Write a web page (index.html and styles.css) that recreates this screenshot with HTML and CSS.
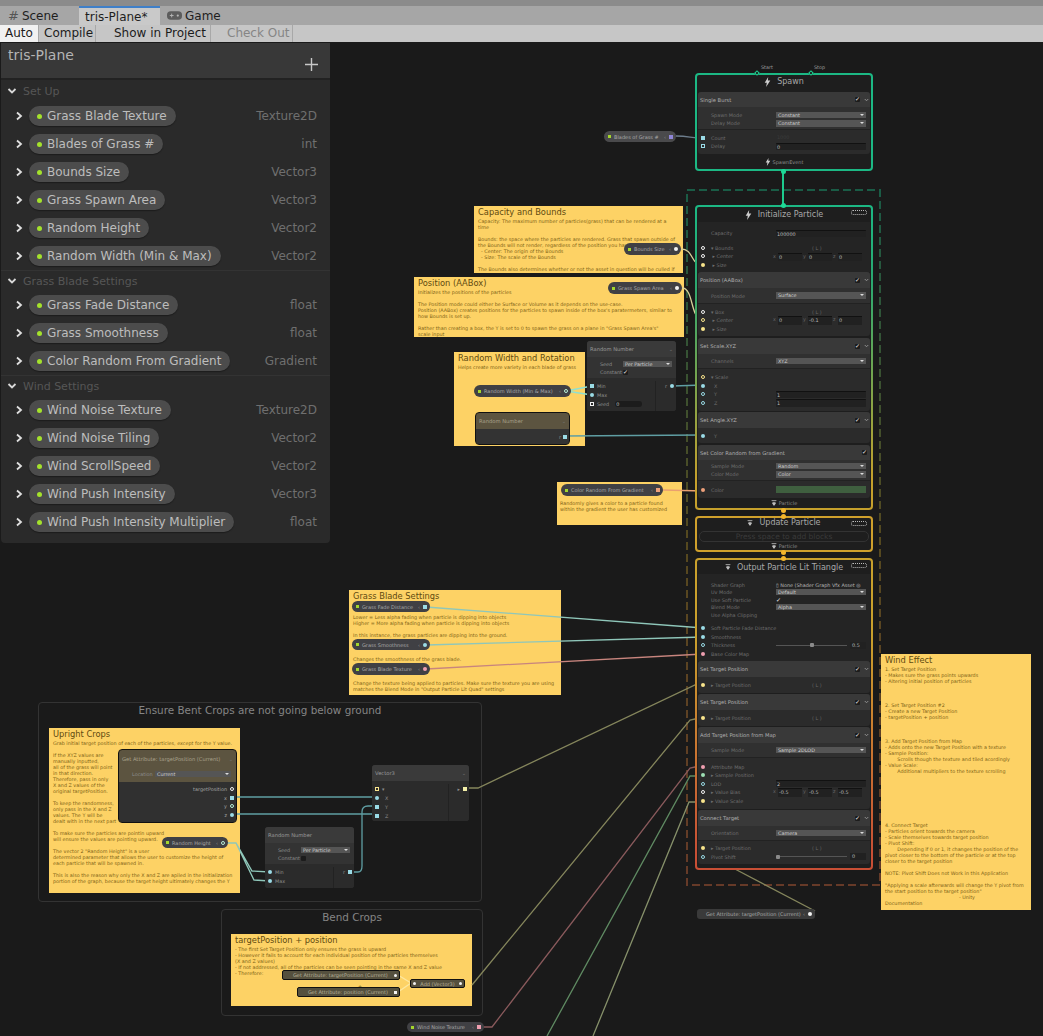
FILE: index.html
```html
<!DOCTYPE html>
<html lang="en">
<head>
    <meta charset="UTF-8">
    <meta name="viewport" content="width=device-width, initial-scale=1.0">
    <title>tris-Plane</title>
    <link rel="stylesheet" href="styles.css">
</head>
<body>

    <svg class="defs" width="0" height="0">
        <symbol id="bolt" viewBox="0 0 10 14"><path d="M6 0 1 8h3l-1 6 6-9H5.5z" fill="currentColor"/></symbol>
        <symbol id="flowtri" viewBox="0 0 10 10"><path d="M1 1h8M2.5 4h5M5 9 2.5 5.5h5z" fill="currentColor" stroke="currentColor" stroke-width="1.2"/></symbol>
        <symbol id="arrow" viewBox="0 0 8 10"><path d="M2 1.500 6 5 2 8.5" fill="none" stroke="currentColor" stroke-width="1.8"/></symbol>
        <symbol id="down" viewBox="0 0 10 8"><path d="M1.500 2 5 5.5 8.5 2" fill="none" stroke="currentColor" stroke-width="1.8"/></symbol>
    </svg>

    <div class="strip"></div>

    <!-- tabs -->
    <div class="tabs">
        <div class="tab tab-scene"><span class="tab-hash">#</span> Scene</div>
        <div class="tab tab-active">tris-Plane*</div>
        <div class="tab tab-game">
            <svg class="pad" viewBox="0 0 16 9"><rect width="16" height="9" rx="4" fill="#5c5c5c"/><path d="M3 4.5h4M5 2.5v4" stroke="#b5b5b5"/><circle cx="11.5" cy="4.5" r="1.2" fill="#b5b5b5"/></svg>
            Game
        </div>
    </div>

    <!-- toolbar -->
    <div class="toolbar">
        <div class="tool tool-on">Auto</div>
        <div class="tool tool-compile">Compile</div>
        <div class="tool tool-show">Show in Project</div>
        <div class="tool tool-off">Check Out</div>
    </div>

    <div class="graph">

        <!-- blackboard -->
        <div class="board">
            <div class="board-head">
                <span class="board-title">tris-Plane</span>
                <svg class="plus" viewBox="0 0 13 13"><path d="M6.500 0v13M0 6.500h13" stroke="#c8c8c8" stroke-width="1.4"/></svg>
            </div>

            <div class="sec sec-first"><svg class="ic-down"><use href="#down"/></svg>Set Up</div>
            <div class="prop"><svg class="ic-arrow"><use href="#arrow"/></svg><span class="chip"><i></i>Grass Blade Texture</span><em>Texture2D</em></div>
            <div class="prop"><svg class="ic-arrow"><use href="#arrow"/></svg><span class="chip"><i></i>Blades of Grass #</span><em>int</em></div>
            <div class="prop"><svg class="ic-arrow"><use href="#arrow"/></svg><span class="chip"><i></i>Bounds Size</span><em>Vector3</em></div>
            <div class="prop"><svg class="ic-arrow"><use href="#arrow"/></svg><span class="chip"><i></i>Grass Spawn Area</span><em>Vector3</em></div>
            <div class="prop"><svg class="ic-arrow"><use href="#arrow"/></svg><span class="chip"><i></i>Random Height</span><em>Vector2</em></div>
            <div class="prop"><svg class="ic-arrow"><use href="#arrow"/></svg><span class="chip"><i></i>Random Width (Min &amp; Max)</span><em>Vector2</em></div>

            <div class="sec"><svg class="ic-down"><use href="#down"/></svg>Grass Blade Settings</div>
            <div class="prop"><svg class="ic-arrow"><use href="#arrow"/></svg><span class="chip"><i></i>Grass Fade Distance</span><em>float</em></div>
            <div class="prop"><svg class="ic-arrow"><use href="#arrow"/></svg><span class="chip"><i></i>Grass Smoothness</span><em>float</em></div>
            <div class="prop"><svg class="ic-arrow"><use href="#arrow"/></svg><span class="chip"><i></i>Color Random From Gradient</span><em>Gradient</em></div>

            <div class="sec"><svg class="ic-down"><use href="#down"/></svg>Wind Settings</div>
            <div class="prop"><svg class="ic-arrow"><use href="#arrow"/></svg><span class="chip"><i></i>Wind Noise Texture</span><em>Texture2D</em></div>
            <div class="prop"><svg class="ic-arrow"><use href="#arrow"/></svg><span class="chip"><i></i>Wind Noise Tiling</span><em>Vector2</em></div>
            <div class="prop"><svg class="ic-arrow"><use href="#arrow"/></svg><span class="chip"><i></i>Wind ScrollSpeed</span><em>Vector2</em></div>
            <div class="prop"><svg class="ic-arrow"><use href="#arrow"/></svg><span class="chip"><i></i>Wind Push Intensity</span><em>Vector3</em></div>
            <div class="prop"><svg class="ic-arrow"><use href="#arrow"/></svg><span class="chip"><i></i>Wind Push Intensity Multiplier</span><em>float</em></div>
        </div>

        <!-- groups -->
        <div class="group g-ensure">Ensure Bent Crops are not going below ground</div>
        <div class="group g-bend">Bend Crops</div>

        <!-- sticky notes -->
        <div class="note n-capacity"><h3>Capacity and Bounds</h3><p>Capacity: The maximum number of particles(grass) that can be rendered at a
time

Bounds: the space where the particles are rendered. Grass that spawn outside of
the Bounds will not render, regardless of the position you have set.
  - Center: The origin of the Bounds
  - Size: The scale of the Bounds

The Bounds also determines whether or not the asset in question will be culled if</p></div>

        <div class="note n-position"><h3>Position (AABox)</h3><p>Initializes the positions of the particles

The Position mode could either be Surface or Volume as it depends on the use-case.
Position (AABox) creates positions for the particles to spawn inside of the box's paratermeters, similar to
how Bounds is set up.

Rather than creating a box, the Y is set to 0 to spawn the grass on a plane in "Grass Spawn Area's"
scale input</p></div>

        <div class="note n-random"><h3>Random Width and Rotation</h3><p>Helps create more variety in each blade of grass</p></div>

        <div class="note n-color"><p>Randomly gives a color to a particle found
within the gradient the user has customized</p></div>

        <div class="note n-blade"><h3>Grass Blade Settings</h3><p>

Lower = Less alpha fading when particle is dipping into objects
Higher = More alpha fading when particle is dipping into objects

In this instance, the grass particles are dipping into the ground.



Changes the smoothness of the grass blade.



Change the texture being applied to particles. Make sure the texture you are using
matches the Blend Mode in "Output Particle Lit Quad" settings</p></div>

        <div class="note n-upright"><h3>Upright Crops</h3><p>Grab initial target position of each of the particles, except for the Y value.

If the XYZ values are
manually inputted,
all of the grass will point
in that direction.
Therefore, pass in only
X and Z values of the
original targetPosition.

To keep the randomness,
only pass in the X and Z
values. The Y will be
dealt with in the next part

To make sure the particles are pointin upward
will ensure the values are pointing upward.

The vector 2 "Random Height" is a user
determined parameter that allows the user to customize the height of
each particle that will be spawned in.

This is also the reason why only the X and Z are apiled in the initialization
portion of the graph, because the target height ultimately changes the Y</p></div>

        <div class="note n-wind"><h3>Wind Effect</h3><p>1. Set Target Position
- Makes sure the grass points upwards
- Altering initial position of particles



2. Set Target Position #2
- Create a new Target Position
- targetPosition + position



3. Add Target Position from Map
- Adds onto the new Target Position with a texture
- Sample Position:
        Scrolls though the texture and tiled acordingly
- Value Scale:
        Additional multipliers to the texture scrolling








4. Connect Target
- Particles orient towards the camera
- Scale themselves towards target position
- Pivot Shift:
        Depending if 0 or 1, it changes the position of the
pivot closer to the bottom of the particle or at the top
closer to the target position

NOTE: Pivot Shift Does not Work in this Application

"Applying a scale afterwards will change the Y pivot from
the start position to the target position"
                                                - Unity
Documentation</p></div>

        <div class="note n-target"><h3>targetPosition + position</h3><p>- The first Set Target Position only ensures the grass is upward
- However it fails to account for each individual position of the particles themselves
(X and Z values)
- If not addressed, all of the particles can be seen pointing in the same X and Z value
- Therefore:</p><span class="plus-mark">+</span></div>

        <!-- edges -->
        <svg class="edges" viewBox="0 42 1043 994">
            <defs>
                <linearGradient id="frame" x1="0" y1="0" x2="0" y2="1">
                    <stop offset="0" stop-color="#1a5c46"/>
                    <stop offset="0.5" stop-color="#55491f"/>
                    <stop offset="1" stop-color="#663a28"/>
                </linearGradient>
            </defs>
            <rect class="frame" x="687" y="190" width="193" height="695" stroke="url(#frame)"/>

            <path class="edge e-grey" d="M676 136C690 136 690 138 703 138"/>
            <path class="edge e-pale" d="M681 249C694 249 690 265 703 265"/>
            <path class="edge e-pale" d="M682 288C694 288 690 320 703 320"/>
            <path class="edge e-cyan" d="M566 391 592 386M566 391 592 395"/>
            <path class="edge e-teal" d="M673 386 703 385"/>
            <path class="edge e-teal" d="M565 436 703 435"/>
            <path class="edge e-peach" d="M663 490 703 491"/>
            <path class="edge e-mint" d="M426 607 703 628"/>
            <path class="edge e-mint" d="M426 645 703 637"/>
            <path class="edge e-rose" d="M426 669 703 654"/>

            <path class="edge e-teal" d="M232 797H377M232 814H377"/>
            <path class="edge e-teal" d="M350 872H358Q362 872 362 866V812Q362 806 368 806H377"/>
            <path class="edge e-mint" d="M224 843H236L252 871 270 872M236 843 254 880 270 881"/>

            <path class="edge e-olive" d="M465 788H478L695 685 703 686"/>
            <path class="edge e-olive" d="M472 985 690 720 695 719H703"/>
            <path class="edge e-red" d="M480 1027H492L690 768 695 767H703"/>
            <path class="edge e-green" d="M547 1036 690 776 695 776H703"/>
            <path class="edge e-sage" d="M593 1036 689 802 695 802H703"/>
            <path class="edge e-olive" d="M733 868 815 911"/>
            <path class="edge e-light" d="M398 975 411 983M398 992 411 983"/>

            <path class="flow-line f-green" d="M783 171V205"/>
        </svg>

        <!-- standalone property nodes -->
        <div class="pill p-blades"><i class="sq lime"></i>Blades of Grass #<b>‹</b><i class="sq violet"></i></div>
        <div class="pill p-bounds"><i class="sq lime"></i>Bounds Size<b>‹</b><i class="dot white"></i></div>
        <div class="pill p-spawn"><i class="sq lime"></i>Grass Spawn Area<b>‹</b><i class="dot white"></i></div>
        <div class="pill p-width"><i class="sq lime"></i>Random Width (Min &amp; Max)<b>‹</b><i class="dot ring-mint"></i></div>
        <div class="pill p-color"><i class="sq lime"></i>Color Random From Gradient<b>‹</b><i class="sq peach"></i></div>
        <div class="pill p-fade"><i class="sq lime"></i>Grass Fade Distance<b>‹</b><i class="sq sky"></i></div>
        <div class="pill p-smooth"><i class="sq lime"></i>Grass Smoothness<b>‹</b><i class="dot sky"></i></div>
        <div class="pill p-texture"><i class="sq lime"></i>Grass Blade Texture<b>‹</b><i class="dot pink"></i></div>
        <div class="pill p-height"><i class="sq lime"></i>Random Height<b>‹</b><i class="dot ring-mint"></i></div>
        <div class="pill p-noise"><i class="sq lime"></i>Wind Noise Texture<b>‹</b><i class="sq pink"></i></div>

        <div class="pill p-attr"><span>Get Attribute: targetPosition (Current)</span><b>‹</b><i class="dot white"></i></div>
        <div class="tag t-target">Get Attribute: targetPosition (Current)<i class="dot white"></i></div>
        <div class="tag t-position">Get Attribute: position (Current)<i class="sq white"></i></div>
        <div class="tag t-add"><i class="dot white"></i>Add (Vector3)<i class="dot white"></i></div>

        <!-- random number, top -->
        <div class="node m-rand1">
            <div class="node-head h16">Random Number<span class="node-v">⌄</span></div>
            <div class="node-set h21">
                <div class="kv"><span>Seed</span><div class="select">Per Particle</div></div>
                <div class="kv"><span>Constant</span><div class="check on"></div></div>
            </div>
            <div class="node-io">
                <div class="io-left">
                    <div class="io"><i class="sq sky"></i>Min</div>
                    <div class="io"><i class="dot sky"></i>Max</div>
                    <div class="io"><i class="sq ring-white"></i>Seed<span class="num">0</span></div>
                </div>
                <div class="io-right"><div class="io">r<i class="dot sky"></i></div></div>
            </div>
        </div>

        <!-- random number on the note -->
        <div class="node sel m-rand2">
            <div class="node-head brown h16">Random Number<span class="node-v">⌄</span></div>
            <div class="node-out">r<i class="sq sky"></i></div>
        </div>

        <!-- get attribute -->
        <div class="node sel m-attr">
            <div class="node-head brown h17">Get Attribute: targetPosition (Current)<span class="node-v">⌄</span></div>
            <div class="node-set brown2 h15">
                <div class="kv kv-loc"><span>Location</span><div class="select">Current</div></div>
            </div>
            <div class="attr-out">
                <div class="io">targetPosition<i class="dot ring-white"></i></div>
                <div class="io">x<i class="sq sky"></i></div>
                <div class="io">y<i class="dot ring-mint"></i></div>
                <div class="io">z<i class="dot sky"></i></div>
            </div>
        </div>

        <!-- random number, bottom -->
        <div class="node m-rand3">
            <div class="node-head h16">Random Number</div>
            <div class="node-set h21">
                <div class="kv"><span>Seed</span><div class="select">Per Particle</div></div>
                <div class="kv"><span>Constant</span><div class="check"></div></div>
            </div>
            <div class="node-io">
                <div class="io-left">
                    <div class="io"><i class="dot sky"></i>Min</div>
                    <div class="io"><i class="dot sky"></i>Max</div>
                </div>
                <div class="io-right"><div class="io">r<i class="sq sky"></i></div></div>
            </div>
        </div>

        <!-- vector3 -->
        <div class="node m-vec">
            <div class="node-head h16">Vector3<span class="node-v">⌄</span></div>
            <div class="node-io">
                <div class="io-left">
                    <div class="io"><i class="sq ring-yellow"></i>▾</div>
                    <div class="io"><i class="dot sky"></i>&nbsp;&nbsp;X</div>
                    <div class="io"><i class="sq sky"></i>&nbsp;&nbsp;Y</div>
                    <div class="io"><i class="sq sky"></i>&nbsp;&nbsp;Z</div>
                </div>
                <div class="io-right"><div class="io">▸<i class="sq cream"></i></div></div>
            </div>
        </div>

        <!-- spawn context -->
        <div class="context c-spawn"><div class="context-in">
            <div class="ctx-title h17 raise"><svg class="ic-bolt"><use href="#bolt"/></svg>Spawn</div>
            <div class="block">
                <div class="block-head h15"><span>Single Burst</span><i class="check on"></i><svg class="ic-v"><use href="#down"/></svg></div>
                <div class="settings h23 drop">
                    <div class="row"><i></i><span>Spawn Mode</span><div class="select">Constant</div></div>
                    <div class="row"><i></i><span>Delay Mode</span><div class="select">Constant</div></div>
                </div>
                <div class="props h24">
                    <div class="row"><i class="sq sky"></i><span>Count</span><div class="field off">1000</div></div>
                    <div class="row"><i class="sq ring-sky"></i><span>Delay</span><div class="field">0</div></div>
                </div>
            </div>
            <div class="ctx-foot h15"><svg class="ic-bolt small"><use href="#bolt"/></svg>SpawnEvent</div>
        </div></div>

        <!-- initialize context -->
        <div class="context c-init"><div class="context-in">
            <div class="ctx-title h15"><svg class="ic-bolt"><use href="#bolt"/></svg>Initialize Particle<span class="badge"></span></div>
            <div class="settings flat h50 pad4">
                <div class="row row-gap"><i></i><span>Capacity</span><div class="field">100000</div></div>
                <div class="row"><i class="dot ring-white"></i><span>▾ Bounds</span><em class="space">( L )</em></div>
                <div class="row"><i class="dot ring-white"></i><span>&nbsp;▸ Center</span><div class="vec"><s>x</s><b>0</b><s>y</s><b>0</b><s>z</s><b>0</b></div></div>
                <div class="row"><i class="dot yellow"></i><span>&nbsp;▸ Size</span></div>
            </div>
            <div class="block">
                <div class="block-head h16"><span>Position (AABox)</span><i class="check on"></i><svg class="ic-v"><use href="#down"/></svg></div>
                <div class="settings h16">
                    <div class="row"><i></i><span>Position Mode</span><div class="select">Surface</div></div>
                </div>
                <div class="props h32">
                    <div class="row"><i class="dot ring-white"></i><span>▾ Box</span><em class="space">( L )</em></div>
                    <div class="row"><i class="dot ring-yellow"></i><span>&nbsp;▸ Center</span><div class="vec"><s>x</s><b>0</b><s>y</s><b>-0.1</b><s>z</s><b>0</b></div></div>
                    <div class="row"><i class="dot yellow"></i><span>&nbsp;▸ Size</span></div>
                </div>
            </div>
            <div class="block mt2">
                <div class="block-head h16"><span>Set Scale.XYZ</span><i class="check on"></i><svg class="ic-v"><use href="#down"/></svg></div>
                <div class="settings h15">
                    <div class="row"><i></i><span>Channels</span><div class="select">XYZ</div></div>
                </div>
                <div class="props h42">
                    <div class="row"><i class="dot ring-yellow"></i><span>▾ Scale</span></div>
                    <div class="row"><i class="dot sky"></i><span>&nbsp;&nbsp;X</span></div>
                    <div class="row"><i class="dot ring-sky"></i><span>&nbsp;&nbsp;Y</span><div class="field">1</div></div>
                    <div class="row"><i class="dot ring-sky"></i><span>&nbsp;&nbsp;Z</span><div class="field">1</div></div>
                </div>
            </div>
            <div class="block mt1">
                <div class="block-head h16"><span>Set Angle.XYZ</span><i class="check on"></i><svg class="ic-v"><use href="#down"/></svg></div>
                <div class="props h15">
                    <div class="row"><i class="dot sky"></i><span>&nbsp;&nbsp;Y</span></div>
                </div>
            </div>
            <div class="block mt2">
                <div class="block-head h15"><span>Set Color Random from Gradient</span><i class="check on"></i></div>
                <div class="settings h21">
                    <div class="row"><i></i><span>Sample Mode</span><div class="select">Random</div></div>
                    <div class="row"><i></i><span>Color Mode</span><div class="select">Color</div></div>
                </div>
                <div class="props h17">
                    <div class="row"><i class="dot peach"></i><span>Color</span><div class="grad"></div></div>
                </div>
            </div>
            <div class="ctx-foot h10"><svg class="ic-flow"><use href="#flowtri"/></svg>Particle</div>
        </div></div>

        <!-- update context -->
        <div class="context c-update"><div class="context-in">
            <div class="ctx-title h13 raise"><svg class="ic-flow"><use href="#flowtri"/></svg>Update Particle<span class="badge"></span></div>
            <div class="press">Press space to add blocks</div>
            <div class="ctx-foot h8"><svg class="ic-flow"><use href="#flowtri"/></svg>Particle</div>
        </div></div>

        <!-- output context -->
        <div class="context c-output"><div class="context-in">
            <div class="ctx-title h14"><svg class="ic-flow"><use href="#flowtri"/></svg>Output Particle Lit Triangle<span class="badge"></span></div>
            <div class="settings flat h47 tight pad4">
                <div class="row"><i></i><span>Shader Graph</span><div class="asset">▯ None (Shader Graph Vfx Asset ◎</div></div>
                <div class="row"><i></i><span>Uv Mode</span><div class="select">Default</div></div>
                <div class="row"><i></i><span>Use Soft Particle</span><div class="tick">✓</div></div>
                <div class="row"><i></i><span>Blend Mode</span><div class="select">Alpha</div></div>
                <div class="row"><i></i><span>Use Alpha Clipping</span></div>
            </div>
            <div class="settings flat h40">
                <div class="row"><i class="dot sky"></i><span>Soft Particle Fade Distance</span></div>
                <div class="row"><i class="dot sky"></i><span>Smoothness</span></div>
                <div class="row"><i class="dot ring-sky"></i><span>Thickness</span><div class="slider s-half"><u></u><b>0.5</b></div></div>
                <div class="row"><i class="dot pink"></i><span>Base Color Map</span></div>
            </div>
            <div class="block">
                <div class="block-head h16"><span>Set Target Position</span><i class="check on"></i><svg class="ic-v"><use href="#down"/></svg></div>
                <div class="props h16">
                    <div class="row"><i class="dot yellow"></i><span>▸ Target Position</span><em class="space">( L )</em></div>
                </div>
            </div>
            <div class="block mt1">
                <div class="block-head h16"><span>Set Target Position</span><i class="check on"></i><svg class="ic-v"><use href="#down"/></svg></div>
                <div class="props h16">
                    <div class="row"><i class="dot yellow"></i><span>▸ Target Position</span><em class="space">( L )</em></div>
                </div>
            </div>
            <div class="block mt1">
                <div class="block-head h16"><span>Add Target Position from Map</span><i class="check on"></i><svg class="ic-v"><use href="#down"/></svg></div>
                <div class="settings h15">
                    <div class="row"><i></i><span>Sample Mode</span><div class="select">Sample 2DLOD</div></div>
                </div>
                <div class="props h51">
                    <div class="row"><i class="dot pink"></i><span>Attribute Map</span></div>
                    <div class="row"><i class="dot mint"></i><span>▸ Sample Position</span></div>
                    <div class="row"><i class="dot ring-sky"></i><span>LOD</span><div class="field">2</div></div>
                    <div class="row"><i class="dot ring-white"></i><span>▸ Value Bias</span><div class="vec"><s>x</s><b>-0.5</b><s>y</s><b>-0.5</b><s>z</s><b>-0.5</b></div></div>
                    <div class="row"><i class="dot yellow"></i><span>▸ Value Scale</span></div>
                </div>
            </div>
            <div class="block mt1">
                <div class="block-head h16"><span>Connect Target</span><i class="check on"></i><svg class="ic-v"><use href="#down"/></svg></div>
                <div class="settings h15">
                    <div class="row"><i></i><span>Orientation</span><div class="select">Camera</div></div>
                </div>
                <div class="props h23">
                    <div class="row"><i class="dot yellow"></i><span>▸ Target Position</span><em class="space">( L )</em></div>
                    <div class="row"><i class="dot ring-sky"></i><span>Pivot Shift</span><div class="slider s-zero"><u></u><b>0</b></div></div>
                </div>
            </div>
        </div></div>

        <!-- flow ports -->
        <i class="flow fg f1"></i><i class="flow fg f2"></i>
        <i class="flow fy f3"></i><i class="flow fy f4"></i>
        <i class="flow fy f5"></i><i class="flow fy f6"></i>
        <span class="fl-label l-start">Start</span>
        <span class="fl-label l-stop">Stop</span>
        <i class="fl-port fp1"></i><i class="fl-port fp2"></i>
    </div>

</body>
</html>
```

FILE: styles.css
```css
* {
    box-sizing: border-box;
}

body {
    margin: 0;
    width: 1043px;
    height: 1036px;
    overflow: hidden;
    background-color: #1a1a1a;
    font-family: "DejaVu Sans", sans-serif;
    display: flex;
    flex-direction: column;
}

.defs {
    position: absolute;
}

/* Barra de abas */
.strip {
    height: 6px;
    background-color: #8b8b8b;
}

.tabs {
    height: 19px;
    display: flex;
    background-color: #a6a6a6;
    font-size: 12px;
    color: #1e1e1e;
}

.tab {
    display: flex;
    align-items: center;
    padding-left: 8px;
    gap: 3px;
}

.tab-scene {
    width: 79px;
}

.tab-hash {
    color: #555;
    font-size: 13px;
}

.tab-active {
    width: 81px;
    padding-left: 6px;
    background-color: #c9c9c9;
    border-top: 2px solid #3f7fc8;
}

.tab-game {
    padding-left: 7px;
}

.pad {
    width: 15px;
    height: 9px;
}

/* Toolbar */
.toolbar {
    height: 17px;
    display: flex;
    background-color: #c6c6c6;
    font-size: 12px;
    color: #1c1c1c;
    white-space: nowrap;
}

.tool {
    padding: 0 5px;
    line-height: 17px;
    border-right: 1px solid #a8a8a8;
}

.tool-on {
    width: 39px;
    background-color: #f1f1f1;
}

.tool-compile {
    width: 57px;
}

.tool-show {
    width: 115px;
    padding-left: 18px;
}

.tool-off {
    width: 82px;
    padding-left: 16px;
    color: #858585;
}

/* Grafo */
.graph {
    position: relative;
    flex: 1;
    background-color: #1a1a1a;
    overflow: hidden;
}

.graph > * {
    position: absolute;
}

/* Blackboard */
.board {
    left: 1px;
    top: 1px;
    width: 329px;
    height: 500px;
    background-color: #2a2a2a;
    border-radius: 0 0 4px 4px;
    z-index: 5;
}

.board-head {
    height: 37px;
    background-color: #383838;
    border-bottom: 2px solid #222;
    display: flex;
    align-items: flex-start;
    justify-content: space-between;
    padding: 4px 12px 0 7px;
}

.board-title {
    font-size: 14px;
    color: #b4b4b4;
}

.plus {
    width: 13px;
    height: 13px;
    margin-top: 11px;
}

.sec {
    height: 21px;
    display: flex;
    align-items: center;
    padding-left: 6px;
    gap: 6px;
    font-size: 11px;
    color: #565656;
    border-top: 1px solid #333;
}

.sec-first {
    height: 22px;
    border-top: 0;
}

.ic-down {
    width: 10px;
    height: 8px;
    color: #d8d8d8;
}

.prop {
    height: 28px;
    display: flex;
    align-items: center;
    padding: 0 13px 0 14px;
    font-size: 12px;
}

.ic-arrow {
    width: 8px;
    height: 10px;
    color: #e0e0e0;
}

.chip {
    margin-left: 6px;
    height: 20px;
    padding: 0 9px 0 8px;
    border-radius: 10px;
    background-color: #4c4c4c;
    color: #bdbdbd;
    display: inline-flex;
    align-items: center;
    box-shadow: 0 1px 1px #1c1c1c;
}

.chip i {
    width: 5px;
    height: 5px;
    border-radius: 50%;
    background-color: #a4e22c;
    margin-right: 5px;
}

.prop em {
    margin-left: auto;
    font-style: normal;
    color: #6f6f6f;
}

/* Grupos */
.group {
    border: 1px solid #333;
    border-radius: 4px;
    text-align: center;
    font-size: 10.4px;
    color: #858585;
    padding-top: 1px;
}

.g-ensure {
    left: 38px;
    top: 660px;
    width: 444px;
    height: 200px;
}

.g-bend {
    left: 221px;
    top: 867px;
    width: 262px;
    height: 107px;
}

/* Notas */
.note {
    background-color: #fdd265;
    color: #7d6215;
    padding: 0 4px;
    overflow: hidden;
    font-size: 4.85px;
    line-height: 6px;
}

.note h3 {
    margin: 0;
    height: 12px;
    font-size: 8.3px;
    line-height: 12px;
    font-weight: normal;
    color: #5f4a10;
}

.note p {
    margin: 0;
    white-space: pre;
}

.n-capacity {
    left: 474px;
    top: 164px;
    width: 209px;
    height: 67px;
}

.n-position {
    left: 414px;
    top: 235px;
    width: 270px;
    height: 60px;
}

.n-random {
    left: 454px;
    top: 310px;
    width: 131px;
    height: 94px;
}

.n-color {
    left: 557px;
    top: 440px;
    width: 125px;
    height: 43px;
    padding: 18px 3px 0;
}

.n-blade {
    left: 349px;
    top: 548px;
    width: 212px;
    height: 105px;
}

.n-upright {
    left: 49px;
    top: 686px;
    width: 191px;
    height: 165px;
}

.n-wind {
    left: 881px;
    top: 612px;
    width: 150px;
    height: 256px;
}

.n-target {
    left: 231px;
    top: 892px;
    width: 241px;
    height: 72px;
}

.plus-mark {
    position: absolute;
    left: 127px;
    top: 49px;
    color: #8a6b18;
}

/* Edges */
.edges {
    left: 0;
    top: 0;
    width: 1043px;
    height: 994px;
}

.frame {
    fill: none;
    stroke-width: 2;
    stroke-dasharray: 8 4;
}

.edge {
    fill: none;
    stroke-width: 1.3;
}

.e-grey { stroke: #6d7d8c; }
.e-pale { stroke: #d8d09a; }
.e-cyan { stroke: #8fe0d0; }
.e-teal { stroke: #5f9ea3; }
.e-peach { stroke: #eaa070; }
.e-mint { stroke: #8fc7ba; }
.e-rose { stroke: #c8857e; }
.e-olive { stroke: #85865c; }
.e-red { stroke: #8a5a5c; }
.e-green { stroke: #5f8a62; }
.e-sage { stroke: #86906a; }
.e-light { stroke: #fde8a0; }

.flow-line {
    fill: none;
    stroke-width: 2;
}

.f-green { stroke: #1dcb8e; }

/* Portas */
.sq, .dot {
    display: inline-block;
    width: 4px;
    height: 4px;
    flex: none;
}

.dot {
    border-radius: 50%;
}

.lime { background-color: #a4d62c; }
.violet { background-color: #8f86d8; }
.white { background-color: #f2f2f2; }
.peach { background-color: #eea07a; }
.sky { background-color: #9adbe6; }
.pink { background-color: #ef9fb0; }
.yellow { background-color: #f8e48c; }
.cream { background-color: #f3efa8; }
.mint { background-color: #9ee0b4; }
.ring-white { border: 1px solid #f2f2f2; }
.ring-mint { border: 1px solid #b8f0d8; }
.ring-sky { border: 1px solid #9adbe6; }
.ring-yellow { border: 1px solid #f8e48c; }

/* Pills */
.pill, .tag {
    display: flex;
    align-items: center;
    white-space: nowrap;
    font-size: 5px;
    color: #a9a9a9;
}

.pill {
    background-color: #404044;
    border-radius: 6px;
    padding: 0 3px 0 4px;
}

.pill > .sq:first-child {
    width: 3px;
    height: 3px;
    margin-right: 3px;
}

.pill b {
    margin-left: auto;
    margin-right: 3px;
    font-weight: normal;
    color: #888;
}

.p-blades { left: 604px; top: 89px; width: 72px; height: 11px; background-color: #4a4a4c; }
.p-bounds { left: 624px; top: 201px; width: 57px; height: 12px; }
.p-spawn { left: 608px; top: 240px; width: 74px; height: 12px; }
.p-width { left: 474px; top: 343px; width: 97px; height: 12px; }
.p-color { left: 561px; top: 442px; width: 102px; height: 12px; }
.p-fade { left: 352px; top: 559px; width: 78px; height: 11px; }
.p-smooth { left: 352px; top: 597px; width: 78px; height: 11px; }
.p-texture { left: 352px; top: 621px; width: 78px; height: 12px; }
.p-height { left: 162px; top: 795px; width: 66px; height: 11px; }
.p-noise { left: 407px; top: 980px; width: 77px; height: 10px; }

.p-attr {
    left: 697px;
    top: 867px;
    width: 118px;
    height: 10px;
    border-radius: 3px;
    background-color: #3a3a3a;
    padding-left: 9px;
}

.tag {
    background-color: #55503e;
    border: 1px solid #111;
    border-radius: 2px;
    justify-content: space-between;
    padding: 0 2px 0 6px;
    color: #b8b29c;
}

.tag .dot, .tag .sq {
    width: 3px;
    height: 3px;
}

.t-target { left: 282px; top: 928px; width: 118px; height: 10px; padding-left: 10px; }
.t-position { left: 297px; top: 945px; width: 103px; height: 10px; padding-left: 10px; }
.t-add { left: 410px; top: 937px; width: 55px; height: 9px; padding-left: 2px; }

/* Nodes */
.node {
    background-color: #303030;
    border-radius: 3px;
    font-size: 4.9px;
    color: #8d8d8d;
    overflow: hidden;
}

.node.sel {
    outline: 1px solid #111;
}

.node-head {
    background-color: #3a3a3a;
    display: flex;
    align-items: center;
    justify-content: space-between;
    padding: 0 3px;
    font-size: 5.2px;
    color: #9a9a9a;
    white-space: nowrap;
}

.node-head.brown {
    background-color: #5c5440;
    color: #a9a28c;
}

.node-v {
    color: #777;
}

.node-set {
    background-color: #333;
    padding-top: 3px;
}

.node-set.brown2 {
    background-color: #5c5440;
}

.kv {
    display: grid;
    grid-template-columns: 36px 49px;
    align-items: center;
    height: 8px;
}

.kv > span {
    padding-left: 13px;
}

.kv-loc {
    grid-template-columns: 36px 76px;
}

.node-io {
    display: flex;
    background-color: #2b2b2b;
    height: 33px;
    padding-top: 3px;
}

.io-left {
    flex: 1;
    border-right: 1px solid #222;
}

.io-right {
    flex: none;
    padding-right: 2px;
    margin-left: 6px;
}

.io {
    display: flex;
    align-items: center;
    gap: 3px;
    height: 9px;
    padding-left: 3px;
}

.num {
    margin-left: 3px;
    padding-left: 1px;
    width: 27px;
    background-color: #1c1c1c;
    border-radius: 3px;
    color: #bbb;
}

.node-out {
    height: 15px;
    display: flex;
    align-items: center;
    justify-content: flex-end;
    gap: 2px;
    padding-right: 2px;
    background-color: #333;
}

.attr-out {
    background-color: #303030;
    height: 40px;
    padding: 3px 2px 0 0;
}

.attr-out .io {
    justify-content: flex-end;
    height: 8.5px;
    color: #a5a5a5;
}

.m-rand1 { left: 587px; top: 299px; width: 89px; height: 70px; }
.m-rand2 { left: 476px; top: 371px; width: 93px; height: 31px; }
.m-attr { left: 119px; top: 708px; width: 117px; height: 72px; }
.m-rand3 { left: 265px; top: 785px; width: 89px; height: 61px; }
.m-vec { left: 372px; top: 723px; width: 97px; height: 56px; }

.m-rand3 .node-io {
    height: 24px;
}

.m-vec .node-io {
    height: 40px;
}

.h8 { height: 8px; }
.h10 { height: 10px; }
.h13 { height: 13px; }
.h14 { height: 14px; }
.h15 { height: 15px; }
.h16 { height: 16px; }
.h17 { height: 17px; }
.h21 { height: 21px; }
.h23 { height: 23px; }
.h24 { height: 24px; }
.h32 { height: 32px; }
.h40 { height: 40px; }
.h42 { height: 42px; }
.h47 { height: 47px; }
.h50 { height: 50px; }
.h51 { height: 51px; }

/* Contexts */
.context {
    left: 695px;
    width: 178px;
    padding: 2px;
    border-radius: 4px;
}

.context-in {
    height: 100%;
    background-color: #1e1e1e;
    border-radius: 2px;
    padding: 0 1px;
}

.c-spawn { top: 31px; height: 98px; background: #1cb884; }
.c-init { top: 163px; height: 305px; background: linear-gradient(#1cb884 0%, #2aa870 25%, #c5a02c 90%); }
.c-update { top: 474px; height: 36px; background: #cfa02c; }
.c-output { top: 516px; height: 312px; background: linear-gradient(#c9a02c 0%, #c9a02c 25%, #c94f35 95%); }

.ctx-title {
    position: relative;
    display: flex;
    align-items: center;
    justify-content: center;
    gap: 6px;
    font-size: 8px;
    color: #a8a8a8;
    white-space: nowrap;
}

.ctx-title.raise {
    padding-bottom: 4px;
}

.ctx-foot {
    display: flex;
    align-items: center;
    justify-content: center;
    gap: 2px;
    font-size: 5px;
    color: #8c8c8c;
}

.ic-bolt {
    width: 7px;
    height: 10px;
    color: #cfcfcf;
}

.ic-bolt.small {
    width: 6px;
    height: 8px;
}

.ic-flow {
    width: 6px;
    height: 6px;
    color: #cfcfcf;
}

.badge {
    position: absolute;
    right: 3px;
    top: 3px;
    width: 16px;
    height: 5px;
    border: 1px dotted #bbb;
    border-radius: 2px;
}

.press {
    height: 11px;
    margin: 0 1px;
    border: 1px solid #333;
    border-radius: 5px;
    text-align: center;
    font-size: 7.5px;
    line-height: 9px;
    color: #3a3a3a;
}

/* Blocks */
.block {
    background-color: #2b2b2b;
    border-radius: 3px;
    overflow: hidden;
}

.mt1 { margin-top: 1px; }
.mt2 { margin-top: 2px; }

.block-head {
    display: flex;
    align-items: center;
    background-color: #393939;
    padding: 0 1px 0 2px;
    font-size: 5.2px;
    color: #b0b0b0;
    white-space: nowrap;
}

.block-head span {
    flex: 1;
}

.ic-v {
    width: 5px;
    height: 4px;
    margin-left: 2px;
    color: #999;
}

.check {
    display: block;
    position: relative;
    width: 5px;
    height: 5px;
    background-color: #1c1c1c;
    border-radius: 1px;
    margin-right: 2px;
}

.check.on::after {
    content: "✓";
    position: absolute;
    left: 0;
    top: -2px;
    font-size: 6px;
    line-height: 8px;
    font-style: normal;
    color: #eee;
}

.settings, .props {
    display: flex;
    flex-direction: column;
    justify-content: center;
}

.settings {
    background-color: #303030;
    border-bottom: 1px solid #222;
}

.settings.flat {
    background-color: #242424;
    border-bottom: 0;
}

.pad4 {
    padding-top: 4px;
}

.drop {
    padding-top: 2px;
}

.row {
    display: grid;
    grid-template-columns: 13px 65px 90px;
    align-items: center;
    height: 8.5px;
    font-size: 4.9px;
    color: #6f6f6f;
    white-space: nowrap;
}

.tight .row {
    height: 7.5px;
}

.row-gap {
    margin-bottom: 6px;
}

.row > i {
    margin-left: 3px;
}

.row > em {
    font-style: normal;
}

.space {
    color: #666;
    padding-left: 36px;
}

.select {
    height: 6.5px;
    line-height: 6.5px;
    background-color: #555;
    color: #cfcfcf;
    font-size: 4.9px;
    padding-left: 2px;
    position: relative;
}

.select::after {
    content: "";
    position: absolute;
    right: 2px;
    top: 2px;
    border: 2px solid transparent;
    border-top: 2.5px solid #ddd;
}

.field {
    height: 7.5px;
    line-height: 7.5px;
    background-color: #212121;
    border-top: 1px solid #111;
    border-radius: 1px;
    padding-left: 1px;
    font-size: 4.9px;
    color: #b8b8b8;
}

.field.off {
    background-color: transparent;
    border-top: 0;
    color: #3c3c3c;
}

.vec {
    display: grid;
    grid-template-columns: 4px 24px 4px 24px 4px 24px;
    column-gap: 1px;
    margin-left: -3px;
    width: 94px;
    height: 7.5px;
    line-height: 7.5px;
    font-size: 4.9px;
}

.vec s {
    text-decoration: none;
    color: #666;
}

.vec b {
    font-weight: normal;
    background-color: #212121;
    border-top: 1px solid #111;
    color: #b8b8b8;
    padding-left: 1px;
}

.grad {
    height: 7px;
    background-color: #3f5f3f;
}

.asset {
    color: #b8b8b8;
    font-size: 4.9px;
}

.tick {
    color: #eee;
    font-size: 6px;
    line-height: 7px;
}

.slider {
    position: relative;
    height: 7px;
}

.slider::before {
    content: "";
    position: absolute;
    left: 0;
    top: 3px;
    width: 71px;
    height: 1px;
    background-color: #555;
}

.slider u {
    position: absolute;
    top: 1.5px;
    width: 4px;
    height: 4px;
    background-color: #8a8a8a;
    border-radius: 1px;
}

.s-half u { left: 34px; }
.s-zero u { left: 0; }

.slider b {
    position: absolute;
    right: 0;
    top: 0;
    width: 16px;
    font-weight: normal;
    background-color: #212121;
    color: #b8b8b8;
    line-height: 7px;
    padding-left: 2px;
}

/* Portas de fluxo */
.flow {
    width: 5px;
    height: 5px;
    border-radius: 50%;
}

.fg { background-color: #1dd896; }
.fy { background-color: #f4b62c; }

.f1 { left: 781px; top: 127px; }
.f2 { left: 781px; top: 161px; }
.f3 { left: 781px; top: 466px; }
.f4 { left: 781px; top: 472px; }
.f5 { left: 781px; top: 508px; }
.f6 { left: 781px; top: 514px; }

.fl-label {
    font-size: 4.9px;
    color: #9a9a9a;
}

.l-start { left: 761px; top: 22px; }
.l-stop { left: 814px; top: 22px; }

.fl-port {
    width: 4px;
    height: 4px;
    border: 1px solid #1dd896;
    transform: rotate(45deg);
    background-color: #1a1a1a;
}

.fp1 { left: 755px; top: 29px; }
.fp2 { left: 809px; top: 29px; }
```
